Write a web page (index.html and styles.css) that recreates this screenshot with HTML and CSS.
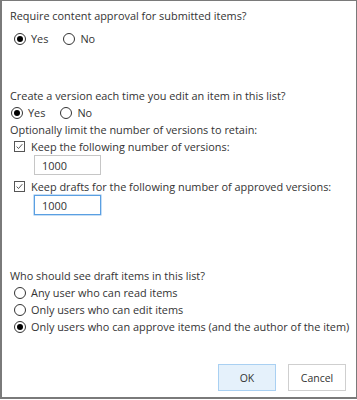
FILE: index.html
```html
<!DOCTYPE html>
<html>
<head>
<meta charset="utf-8">
<link rel="stylesheet" href="styles.css">
</head>
<body>
<div class="dialog">
  <div class="content">
    <section class="sec sec-approval">
      <p class="q">Require content approval for submitted items?</p>
      <div class="row inline indent-a">
        <span class="opt"><span class="radio checked"></span>Yes</span>
        <span class="opt"><span class="radio"></span>No</span>
      </div>
    </section>

    <section class="sec sec-version">
      <p class="q">Create a version each time you edit an item in this list?</p>
      <div class="row inline indent-b">
        <span class="opt"><span class="radio checked"></span>Yes</span>
        <span class="opt"><span class="radio"></span>No</span>
      </div>
      <p class="q">Optionally limit the number of versions to retain:</p>
      <div class="row indent-c">
        <span class="opt"><span class="check"><svg viewBox="0 0 11 11" width="11" height="11"><path d="M2 5.6 L4.3 8 L9 2.6" fill="none" stroke="#333" stroke-width="1"/></svg></span>Keep the following number of versions:</span>
      </div>
      <div class="field"><span class="input">1000</span></div>
      <div class="row indent-c gap-top">
        <span class="opt"><span class="check"><svg viewBox="0 0 11 11" width="11" height="11"><path d="M2 5.6 L4.3 8 L9 2.6" fill="none" stroke="#333" stroke-width="1"/></svg></span>Keep drafts for the following number of approved versions:</span>
      </div>
      <div class="field"><span class="input focus">1000</span></div>
    </section>

    <section class="sec sec-drafts">
      <p class="q">Who should see draft items in this list?</p>
      <div class="row indent-c"><span class="opt"><span class="radio"></span>Any user who can read items</span></div>
      <div class="row indent-c"><span class="opt"><span class="radio"></span>Only users who can edit items</span></div>
      <div class="row indent-c"><span class="opt"><span class="radio checked"></span>Only users who can approve items (and the author of the item)</span></div>
    </section>
  </div>
  <div class="buttons">
    <button class="btn primary">OK</button>
    <button class="btn">Cancel</button>
  </div>
</div>
</body>
</html>
```

FILE: styles.css
```css
html, body {
  margin: 0;
  padding: 0;
  background: #ffffff;
}
.dialog {
  box-sizing: border-box;
  width: 357px;
  height: 399px;
  border: 1px solid #7a7a7a;
  border-left-width: 2px;
  border-bottom-width: 2px;
  background: #fff;
  font-family: "Open Sans", "Noto Sans", sans-serif;
  font-size: 10.9px;
  line-height: 17px;
  color: #333;
  display: flex;
  flex-direction: column;
  justify-content: space-between;
}
.content {
  padding: 6px 0 0 8px;
}
.q {
  margin: 0;
}
.sec-approval .row {
  margin-top: 6px;
}
.sec-version {
  margin-top: 40px;
}
.sec-drafts {
  margin-top: 52px;
}
.row {
  display: flex;
  align-items: center;
  height: 17px;
}
.inline {
  gap: 15px;
}
.indent-a { padding-left: 4px; }
.indent-b { padding-left: 1px; }
.indent-c { padding-left: 4px; }
.opt {
  display: inline-flex;
  align-items: center;
  white-space: nowrap;
}
.radio {
  box-sizing: border-box;
  width: 12px;
  height: 12px;
  border: 1px solid #333;
  border-radius: 50%;
  margin-right: 5px;
  display: inline-flex;
  align-items: center;
  justify-content: center;
}
.radio.checked::after {
  content: "";
  width: 6px;
  height: 6px;
  border-radius: 50%;
  background: #000;
}
.check {
  box-sizing: border-box;
  width: 11px;
  height: 11px;
  border: 1px solid #555;
  margin-right: 6px;
  display: inline-flex;
  align-items: center;
  justify-content: center;
}
.check svg {
  display: block;
  width: 9px;
  height: 9px;
}
.field {
  padding-left: 24px;
  margin-top: 0;
}
.input {
  box-sizing: border-box;
  display: flex;
  align-items: center;
  width: 67px;
  height: 20px;
  padding-left: 7px;
  border: 1px solid #c6c6c6;
  background: #fff;
}
.input.focus {
  border: 1px solid #5a9fe2;
  box-shadow: 0 0 0 0.5px #8dbdeb;
}
.gap-top {
  margin-top: 3px;
}
.buttons {
  display: flex;
  justify-content: flex-end;
  gap: 12px;
  padding: 0 10px 6px 0;
}
.btn {
  box-sizing: border-box;
  width: 58px;
  height: 27px;
  border: 1px solid #cfcfcf;
  background: #fff;
  font-family: "Open Sans", "Noto Sans", sans-serif;
  font-size: 10.5px;
  color: #333;
  padding: 0;
}
.btn.primary {
  background: #e5f1fb;
  border-color: #a9d0f2;
}
```
